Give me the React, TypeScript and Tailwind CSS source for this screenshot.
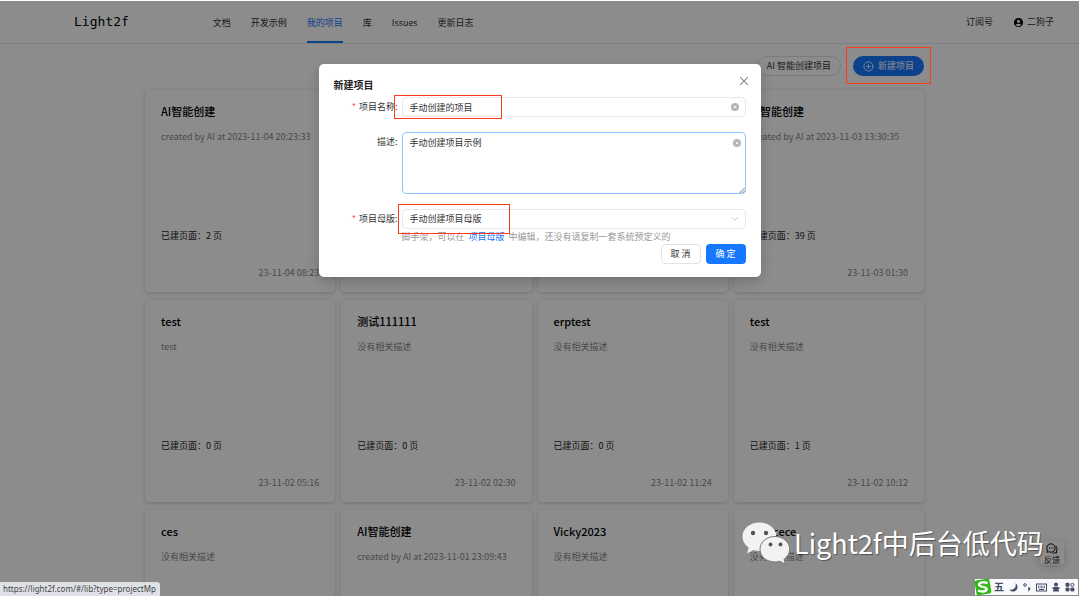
import { CirclePlus, ChevronDown, X } from "lucide-react";
import { MdAccountCircle } from "react-icons/md";
import clsx from "clsx";

type Project = {
  title: string;
  desc: string;
  pages: number;
  date?: string;
};

const navItems = ["文档", "开发示例", "我的项目", "库", "Issues", "更新日志"];

const emptyDesc = "没有相关描述";

const projects: (Project | null)[] = [
  { title: "AI智能创建", desc: "created by AI at 2023-11-04 20:23:33", pages: 2, date: "23-11-04 08:23" },
  null,
  null,
  { title: "AI智能创建", desc: "created by AI at 2023-11-03 13:30:35", pages: 39, date: "23-11-03 01:30" },
  { title: "test", desc: "test", pages: 0, date: "23-11-02 05:16" },
  { title: "测试111111", desc: emptyDesc, pages: 0, date: "23-11-02 02:30" },
  { title: "erptest", desc: emptyDesc, pages: 0, date: "23-11-02 11:24" },
  { title: "test", desc: emptyDesc, pages: 1, date: "23-11-02 10:12" },
  { title: "ces", desc: emptyDesc, pages: 0 },
  { title: "AI智能创建", desc: "created by AI at 2023-11-01 23:09:43", pages: 0 },
  { title: "Vicky2023", desc: emptyDesc, pages: 0 },
  { title: "cececece", desc: emptyDesc, pages: 0 },
];

function Header() {
  return (
    <header className="flex h-11 items-center border-t border-b border-t-white border-b-gray-200 pr-[26px] pl-[74px]">
      <a href="#/" className="font-['DejaVu_Sans_Mono','Noto_Sans_CJK_SC',monospace] text-[13px] leading-4 text-black">
        Light2f
      </a>
      <nav className="ml-[84px] flex h-full gap-5">
        {navItems.map((item) => (
          <a
            key={item}
            href="#/"
            className={clsx(
              "flex items-center border-b-2 pt-1",
              item === "我的项目" ? "border-[#1677ff] text-[#1677ff]" : "border-transparent text-[#333]"
            )}
          >
            {item}
          </a>
        ))}
      </nav>
      <div className="ml-auto flex items-center gap-5 text-[#333]">
        <a href="#/subscribe">订阅号</a>
        <a href="#/user" className="flex items-center gap-[3px]">
          <MdAccountCircle className="size-[11px] text-black" />
          二狗子
        </a>
      </div>
    </header>
  );
}

function ProjectCard({ project }: { project: Project | null }) {
  return (
    <article className="h-[202px] rounded-[4px] bg-white px-4 pt-[13px] pb-[11px] shadow-[0_1px_4px_rgba(0,0,0,0.18)]">
      {project && (
        <>
          <h3 className="text-[11px] leading-4 font-medium text-black">{project.title}</h3>
          <p className="mt-2.5 h-[99px] leading-4 text-[#888]">{project.desc}</p>
          <p className="leading-4 text-[#222]">已建页面：{project.pages} 页</p>
          <p className="mt-[13px] h-6 border-t border-[#f6f6f6] pt-[7px] text-right leading-4 text-[#888]">
            {project.date}
          </p>
        </>
      )}
    </article>
  );
}

function ClearIcon({ className }: { className?: string }) {
  return (
    <svg viewBox="0 0 16 16" className={clsx("size-2", className)} aria-hidden="true">
      <circle cx="8" cy="8" r="8" fill="#b4b4b4" />
      <path d="M5.3 5.3l5.4 5.4M10.7 5.3l-5.4 5.4" stroke="#fff" strokeWidth="1.6" />
    </svg>
  );
}

function Label({ htmlFor, required, children }: { htmlFor: string; required?: boolean; children: string }) {
  return (
    <label htmlFor={htmlFor} className="flex h-5 w-16 shrink-0 items-center justify-end whitespace-nowrap text-[#333]">
      {required && <span className="mr-[3px] text-[#ff4d4f]">*</span>}
      {children}
      <span>:</span>
    </label>
  );
}

function NewProjectDialog() {
  return (
    <form
      role="dialog"
      aria-label="新建项目"
      className="relative w-[442px] rounded-[5px] bg-white px-[15px] py-[13px] shadow-[0_4px_12px_rgba(0,0,0,0.2)]"
    >
      <h2 className="text-[10px] leading-[15px] font-bold text-[#222]">新建项目</h2>
      <button type="button" aria-label="关闭" className="absolute top-2.5 right-2.5 text-[#777]">
        <X className="size-3.5" strokeWidth={1.8} />
      </button>

      <div className="mt-[5px] flex gap-1">
        <Label htmlFor="name" required>
          项目名称
        </Label>
        <div className="relative flex-1">
          <input
            id="name"
            defaultValue="手动创建的项目"
            className="block h-5 w-full rounded-[4px] border border-[#e8e8e8] px-[7px] text-[#333] outline-none"
          />
          <ClearIcon className="absolute top-1.5 right-[7px]" />
          <Highlight className="-top-0.5 -left-2 h-6 w-[108px]" />
        </div>
      </div>

      <div className="mt-[15px] flex gap-1">
        <Label htmlFor="desc">描述</Label>
        <div className="relative flex-1">
          <textarea
            id="desc"
            defaultValue="手动创建项目示例"
            className="block h-[62px] w-full resize-none rounded-[4px] border border-[#8cc4ff] px-[7px] py-0.5 leading-[15px] text-[#333] outline-none"
          />
          <ClearIcon className="absolute top-[7px] right-[5px]" />
          <svg viewBox="0 0 6 6" className="absolute right-px bottom-px size-1.5" aria-hidden="true">
            <path d="M0.5 6L6 0.5M3.5 6L6 3.5" stroke="#555" strokeWidth="0.8" />
          </svg>
        </div>
      </div>

      <div className="mt-[15px] flex gap-1">
        <Label htmlFor="template" required>
          项目母版
        </Label>
        <div className="relative flex-1">
          <select
            id="template"
            className="block h-5 w-full appearance-none rounded-[4px] border border-[#e8e8e8] px-[7px] text-[#333] outline-none"
          >
            <option>手动创建项目母版</option>
          </select>
          <ChevronDown className="absolute top-[5px] right-1.5 size-2.5 text-[#aaa]" strokeWidth={1.8} />
          <p className="leading-[15px] text-[#999]">
            脚手架，可以在
            <a href="#/lib?type=projectMp" className="mx-1 text-[#1677ff]">
              项目母版
            </a>
            中编辑，还没有请复制一套系统预定义的
          </p>
          <Highlight className="-top-[5px] -left-1 h-[30px] w-28" />
        </div>
      </div>

      <div className="flex justify-end gap-[5px]">
        <button type="button" className="h-5 w-10 rounded-[4px] border border-[#e3e3e3] text-[#333]">
          取 消
        </button>
        <button type="submit" className="h-5 w-10 rounded-[4px] bg-[#1677ff] text-white">
          确 定
        </button>
      </div>
    </form>
  );
}

function Highlight({ className }: { className: string }) {
  return <span className={clsx("pointer-events-none absolute border border-[#ff3c1a]", className)} />;
}

function Watermark() {
  return (
    <div className="absolute top-[521px] left-[742px] flex items-center gap-1">
      <svg viewBox="0 0 48 44" className="h-11 w-12" aria-hidden="true">
        <path
          d="M17.5 1.5C8 1.5.5 7.8.5 15.5c0 4.500 2.400 8.300 6.200 11L5 32.500l6.400-3.500c2 .6 4 .9 6.100.9 9.500 0 17-6.400 17-14.200S27 1.500 17.500 1.500z"
          fill="#f2f2f2"
        />
        <path
          d="M33 15.500c-8.300 0-15 5.600-15 12.800S24.700 41 33 41c1.700 0 3.300-.3 4.800-.7l5.700 3-1.500-5c3.500-2.400 5.700-6 5.700-10 0-7.200-6.500-12.800-14.700-12.800z"
          fill="#f2f2f2"
          stroke="#777"
          strokeWidth="1"
        />
        <g fill="#555">
          <circle cx="11" cy="12" r="2.200" />
          <circle cx="24" cy="12" r="2.200" />
          <circle cx="28.500" cy="23.500" r="1.900" />
          <circle cx="38.500" cy="23.500" r="1.900" />
        </g>
      </svg>
      <span className="font-['Noto_Sans_CJK_SC',sans-serif] text-[27px] leading-10 font-normal whitespace-nowrap text-white [text-shadow:1px_1px_1px_rgba(0,0,0,0.4)]">
        Light2f中后台低代码
      </span>
    </div>
  );
}

function InputMethodBar() {
  return (
    <div className="absolute right-0.5 bottom-px flex h-4 items-center gap-[5px] bg-[#f8f9fc] pr-[3px] pl-[19px] text-[#454d69]">
      <svg viewBox="0 0 18 18" className="absolute -top-px -left-px size-[18px]" aria-hidden="true">
        <rect x="1.500" y="1.500" width="15" height="15" rx="2" fill="#32b818" transform="rotate(-10 9 9)" />
        <path
          d="M13.500 5.200C10.500 3.700 5.200 4 5 6.600c-.2 2.700 8 1.700 7.700 4.600-.2 2.600-5.200 3-8.700 1.300"
          fill="none"
          stroke="#fff"
          strokeWidth="2.400"
        />
      </svg>
      <span className="text-[10px] leading-4 font-bold">五</span>
      <svg viewBox="0 0 9 9" className="size-[9px]" fill="currentColor" aria-hidden="true">
        <path d="M6.500 0.300C9 2 9.200 5.400 7.200 7.300 5.200 9.200 2 9 .3 6.800 2.800 7 4.800 6.300 5.900 4.700 6.800 3.400 7 1.900 6.500.3z" />
      </svg>
      <svg viewBox="0 0 8 10" className="h-2.5 w-2" aria-hidden="true">
        <circle cx="2" cy="3" r="1.300" fill="none" stroke="currentColor" />
        <path d="M5 5.500h2.300v1.500L6 9.200H5l.6-1.700H5z" fill="currentColor" />
      </svg>
      <svg viewBox="0 0 11 9" className="h-[9px] w-[11px]" aria-hidden="true">
        <rect x="0.500" y="1" width="10" height="7" fill="none" stroke="currentColor" />
        <path d="M2 3.200h7M2 4.800h7" stroke="currentColor" strokeDasharray="1 0.500" />
        <path d="M3 6.500h5" stroke="currentColor" />
      </svg>
      <svg viewBox="0 0 8 10" className="h-2.5 w-2" fill="currentColor" aria-hidden="true">
        <circle cx="4" cy="2.500" r="2" />
        <path d="M0.500 5.500Q4 4 7.500 5.500V7H6.500L7 9.500H1L1.500 7H.5z" />
      </svg>
      <svg viewBox="0 0 10 10" className="size-2.5" fill="currentColor" aria-hidden="true">
        <rect x="0.500" y="0.800" width="4" height="4" rx="1.300" />
        <circle cx="7.400" cy="2.800" r="1.500" fill="none" stroke="currentColor" />
        <rect x="0.500" y="5.400" width="4" height="4" rx="1.300" />
        <rect x="5.400" y="5.400" width="4" height="4" rx="1.300" />
      </svg>
    </div>
  );
}

export default function App() {
  return (
    <div className="relative h-screen overflow-hidden bg-white font-['Noto_Sans_CJK_SC',sans-serif] text-[9px] leading-4">
      <Header />
      <main className="pt-3 pr-[156px] pl-[145px]">
        <div className="mb-3.5 flex justify-end gap-3">
          <button type="button" className="h-5 rounded-full border border-[#e0e0e0] px-[9px] text-[#333]">
            AI 智能创建项目
          </button>
          <button type="button" className="flex h-5 items-center gap-1 rounded-full bg-[#1677ff] px-2.5 text-white">
            <CirclePlus className="size-[11px]" strokeWidth={1.8} />
            新建项目
          </button>
        </div>
        <section className="grid grid-cols-4 gap-x-1.5 gap-y-2">
          {projects.map((project, i) => (
            <ProjectCard key={i} project={project} />
          ))}
        </section>
      </main>

      <button
        type="button"
        className="absolute right-4 bottom-[31px] flex size-6 flex-col items-center rounded-[4px] bg-white pt-0.5 text-[8px] leading-[11px] text-[#222] shadow-[0_2px_8px_rgba(0,0,0,0.2)]"
      >
        <svg viewBox="0 0 12 11" className="h-[11px] w-3 shrink-0" fill="none" stroke="#111" aria-hidden="true">
          <path d="M5 .8a4.200 4.200 0 1 1-1.800 8L1 9.300l.4-2.200A4.200 4.200 0 0 1 5 .8z" />
          <path d="M9.700 3a4 4 0 0 1 .8 5l.3 2-1.800-.3a4 4 0 0 1-2.500.6" />
          <path d="M3 5h4.500" strokeDasharray="1 0.700" />
        </svg>
        反馈
      </button>

      <div className="absolute inset-x-0 top-px bottom-0 mr-px flex items-start justify-center bg-black/45 pt-[63px]">
        <NewProjectDialog />
      </div>
      <Highlight className="top-[47px] right-[149px] h-[37px] w-[85px]" />

      <Watermark />
      <InputMethodBar />
      <div className="absolute bottom-0 left-0 h-3.5 rounded-tr-[3px] bg-[#dee1e6] pr-1 pl-[3px] font-['Noto_Sans',sans-serif] text-[8px] leading-[14px] text-[#444]">
        https://light2f.com/#/lib?type=projectMp
      </div>
    </div>
  );
}
